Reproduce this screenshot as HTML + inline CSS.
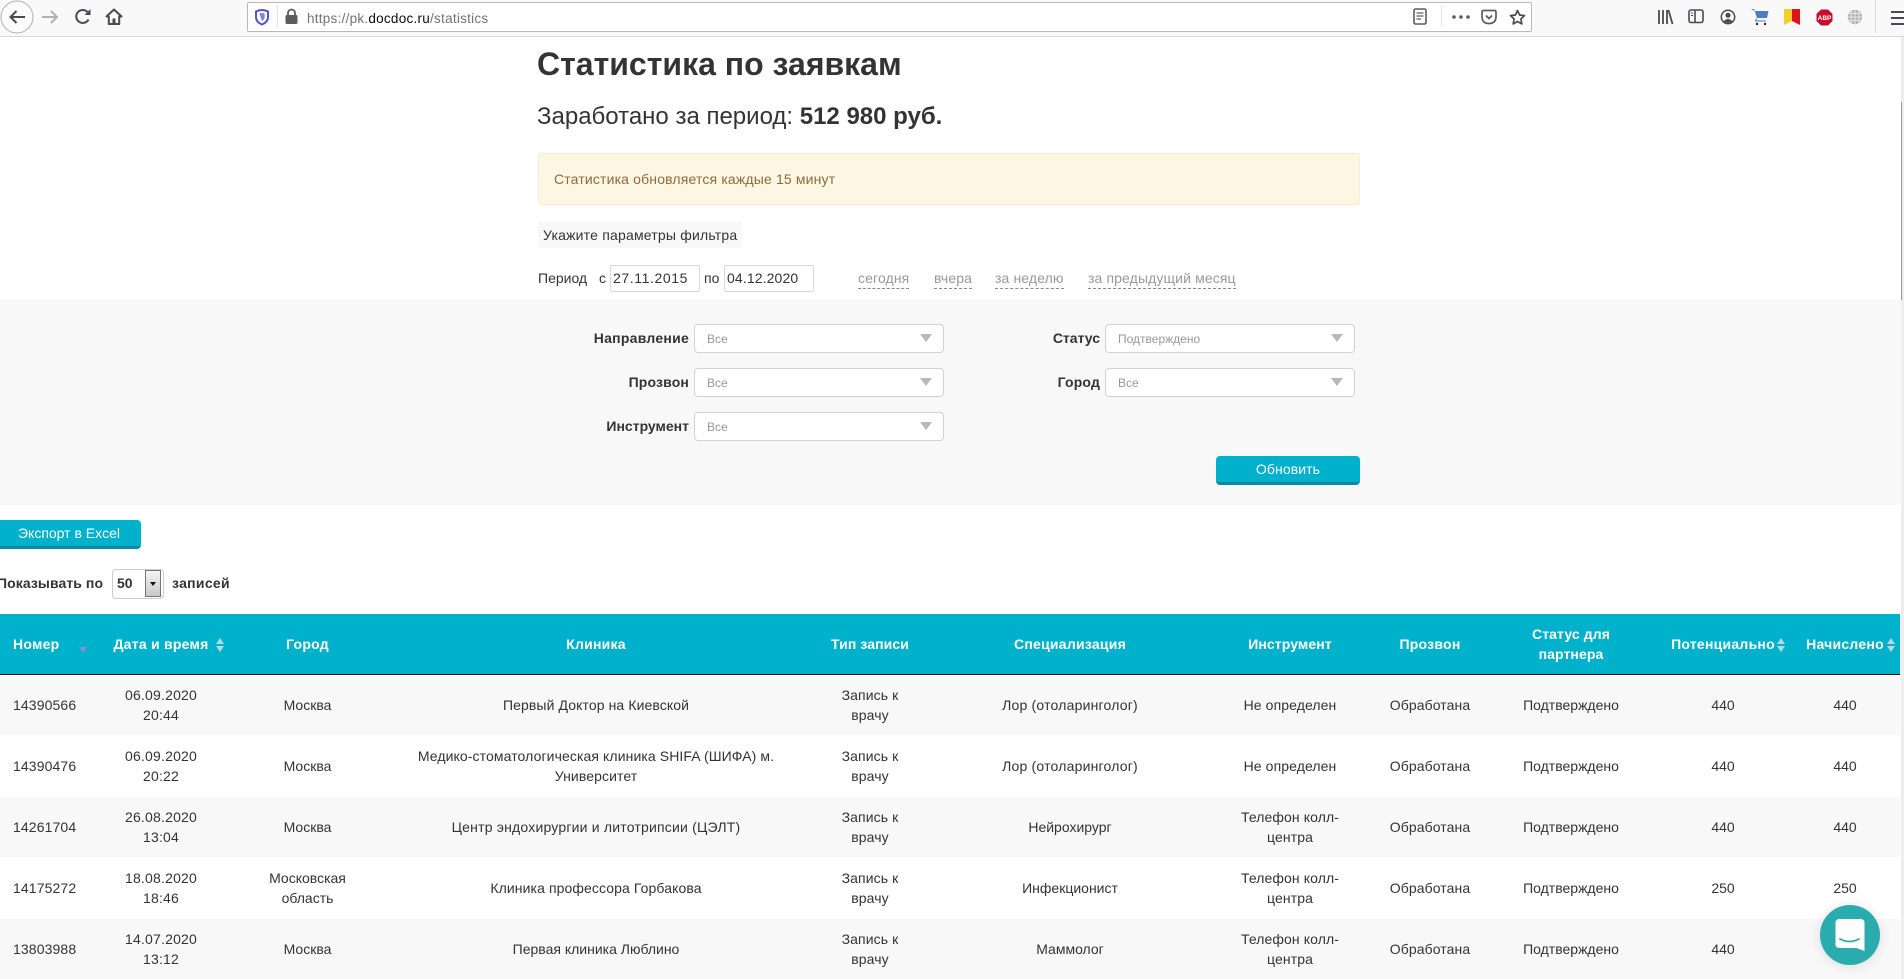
<!DOCTYPE html>
<html lang="ru">
<head>
<meta charset="utf-8">
<title>Статистика по заявкам</title>
<style>
html,body{margin:0;padding:0;width:1904px;height:979px;overflow:hidden;background:#fff}
body{position:relative;font-family:"Liberation Sans",Arial,sans-serif;color:#333;font-size:14px}
.a{position:absolute;white-space:nowrap}
svg{position:absolute;overflow:visible}
#bar{position:absolute;left:0;top:0;width:1904px;height:36px;background:#f9f9fa;border-bottom:1px solid #d7d7db}
#url{position:absolute;left:247px;top:2px;width:1283px;height:28px;background:#fff;border:1px solid #b9b9bb;border-radius:2px}
.sep{position:absolute;width:1px;background:#e4e4e6}
.alert{position:absolute;left:538px;top:153px;width:820px;height:50px;background:#fdf6e3;border:1px solid #f6edd2;border-radius:3px}
.inp{position:absolute;top:265px;height:25px;border:1px solid #d8d8d8;border-radius:2px;font-size:14px;line-height:25px;padding-left:2px;box-sizing:content-box;width:86px;background:#fff}
.lnk{position:absolute;top:269px;height:19px;line-height:19px;color:#999;border-bottom:1px dashed #8a8a8a;white-space:nowrap;font-size:14px;letter-spacing:.12px}
#flt{position:absolute;left:0;top:299px;width:1904px;height:206px;background:#f8f8f8}
.sel{position:absolute;width:248px;height:27px;background:#fff;border:1px solid #d2d2d2;border-radius:4px;font-size:12px;color:#999;line-height:29px;text-indent:12px}
.sel i{position:absolute;right:11px;top:9px;width:0;height:0;border-left:6px solid transparent;border-right:6px solid transparent;border-top:8px solid #b8b8b8}
.lab{position:absolute;font-weight:bold;text-align:right;white-space:nowrap;font-size:14px;line-height:18px}
.btn{position:absolute;background:#00b1cc;border-bottom:3px solid #0a8aa0;color:#fff;font-size:14px;text-align:center;box-sizing:border-box}
table{position:absolute;left:0;top:614px;width:1900px;border-collapse:collapse;table-layout:fixed}
th{background:#00b1cc;color:#fff;font-weight:bold;font-size:14px;line-height:20px;height:60px;padding:0;text-align:center;border-bottom:1px solid #111;white-space:nowrap;letter-spacing:.25px;position:relative}
th.t{letter-spacing:.1px}
td{padding:0;text-align:center;font-size:14px;line-height:20px;white-space:nowrap;color:#333}
td.d{letter-spacing:.2px}
td.c{letter-spacing:.1px}
td.n{text-align:left;padding-left:13px;box-sizing:border-box;letter-spacing:.12px}
td.sp{letter-spacing:.2px}
td:nth-child(9),th:nth-child(9){padding-right:2px}
tr.o td{background:#f8f8f8}
.tri{position:absolute;width:0;height:0;border-left:4px solid transparent;border-right:4px solid transparent}
.up{border-bottom:6px solid #b5d7e0}
.dn{border-top:6px solid #b5d7e0}
#sb{position:absolute;left:1901px;top:37px;width:3px;height:942px;background:#ededed}
#th{position:absolute;left:1901px;top:102px;width:1px;height:198px;background:#9a9a9a}
#chat{position:absolute;left:1820px;top:905px;width:60px;height:60px;border-radius:50%;background:#2aacaf;box-shadow:0 1px 12px rgba(0,0,0,.12)}
</style>
</head>
<body>
<div id="bar">
  <svg style="left:0;top:0" width="140" height="36" viewBox="0 0 140 36">
    <circle cx="17" cy="17" r="16" fill="#fbfbfb" stroke="#b1b1b3"/>
    <path d="M10.500 17H25M16.500 11l-6 6 6 6" fill="none" stroke="#4a4a4f" stroke-width="2"/>
    <path d="M42 17H57M51 11l6 6-6 6" fill="none" stroke="#b1b1b3" stroke-width="2"/>
    <path d="M88.500 19.500a6.500 6.500 0 1 1-1-7.500l2 2" fill="none" stroke="#4a4a4f" stroke-width="2"/>
    <path d="M90.500 9v6h-6z" fill="#4a4a4f"/>
    <path d="M114 9.500l-7.500 7h2.300v7.500h10.400v-7.500h2.300z" fill="none" stroke="#4a4a4f" stroke-width="2" stroke-linejoin="round"/>
    <rect x="112.500" y="18.500" width="3" height="5.500" fill="#4a4a4f"/>
  </svg>
  <div id="url"></div>
  <div class="sep" style="left:277px;top:5px;height:22px"></div>
  <svg style="left:255px;top:9px" width="14" height="16" viewBox="0 0 14 16">
    <path d="M1 2.500Q7-.5 13 2.500V8Q13 13 7 15.500 1 13 1 8Z" fill="#fff" stroke="#5a4fc8" stroke-width="2"/>
    <path d="M4.300 4.500Q7 3.500 9.700 4.500V8Q9.700 10.500 7 12Z" fill="#6a8fd8"/>
  </svg>
  <svg style="left:285px;top:9px" width="13" height="15" viewBox="0 0 13 15">
    <rect x=".5" y="6" width="12" height="9" rx="1.500" fill="#5c5c61"/>
    <path d="M3 6.500V4a3.500 3.500 0 0 1 7 0v2.500" fill="none" stroke="#5c5c61" stroke-width="1.800"/>
  </svg>
  <div class="a" style="left:307px;top:11px;font-size:13.5px;line-height:16px;color:#737373;letter-spacing:.26px">https://pk.<span style="color:#0c0c0d">docdoc.ru</span>/statistics</div>
  <svg style="left:1412px;top:8px" width="16" height="18" viewBox="0 0 16 18">
    <rect x="2" y="1" width="12" height="15" rx="1.500" fill="none" stroke="#5c5c61" stroke-width="1.600"/>
    <path d="M4.500 5H11.500M4.500 8H11.500M4.500 11H9" stroke="#5c5c61" stroke-width="1.200"/>
  </svg>
  <div class="sep" style="left:1441px;top:5px;height:22px"></div>
  <svg style="left:1450px;top:12px" width="24" height="10" viewBox="0 0 24 10">
    <circle cx="4" cy="5" r="1.800" fill="#5c5c61"/><circle cx="11" cy="5" r="1.800" fill="#5c5c61"/><circle cx="18" cy="5" r="1.800" fill="#5c5c61"/>
  </svg>
  <svg style="left:1481px;top:9px" width="16" height="16" viewBox="0 0 16 16">
    <path d="M1 3Q1 1.500 2.500 1.500H13.500Q15 1.500 15 3V7.500Q15 14.500 8 14.500 1 14.500 1 7.500Z" fill="none" stroke="#5c5c61" stroke-width="1.700"/>
    <path d="M5 6.500L8 9.500 11 6.500" fill="none" stroke="#5c5c61" stroke-width="1.800"/>
  </svg>
  <svg style="left:1509px;top:9px" width="17" height="16" viewBox="0 0 17 16">
    <path d="M8.500 1.500l2.100 4.500 4.900.6-3.600 3.400.9 4.900-4.300-2.400-4.300 2.400.9-4.900L1.500 6.600l4.900-.6z" fill="none" stroke="#4a4a4f" stroke-width="1.700" stroke-linejoin="round"/>
  </svg>
  <svg style="left:1657px;top:9px" width="17" height="16" viewBox="0 0 17 16">
    <path d="M2 1V15M6 1V15M10 1V15M11.500 1L15.500 15" stroke="#4a4a4f" stroke-width="1.800" fill="none"/>
  </svg>
  <svg style="left:1688px;top:9px" width="16" height="15" viewBox="0 0 16 15">
    <rect x="1" y="1" width="14" height="12.500" rx="2" fill="none" stroke="#4a4a4f" stroke-width="1.600"/>
    <path d="M7 1V13.500" stroke="#4a4a4f" stroke-width="1.600"/>
    <path d="M3 4H5M3 6.500H5" stroke="#4a4a4f" stroke-width="1"/>
  </svg>
  <svg style="left:1720px;top:9px" width="16" height="16" viewBox="0 0 16 16">
    <circle cx="8" cy="8" r="6.700" fill="none" stroke="#4a4a4f" stroke-width="1.500"/>
    <circle cx="8" cy="6.300" r="2.500" fill="#4a4a4f"/>
    <path d="M3.500 12.500Q8 7.500 12.500 12.500 8 15.500 3.500 12.500Z" fill="#4a4a4f"/>
  </svg>
  <svg style="left:1751px;top:8px" width="18" height="18" viewBox="0 0 18 18">
    <path d="M0 1H3L6 10H16L17.500 3H3.500Z" fill="#4c7cc4"/>
    <path d="M5.500 10.500L4.500 13H15" fill="none" stroke="#4c7cc4" stroke-width="1"/>
    <circle cx="6" cy="16" r="1.200" fill="#222"/><circle cx="14" cy="16" r="1.200" fill="#222"/>
  </svg>
  <svg style="left:1784px;top:9px" width="16" height="16" viewBox="0 0 16 16">
    <path d="M0 0H8V12L0 16Z" fill="#f4cf2e"/><path d="M8 0H16V16L8 12Z" fill="#e0131a"/>
  </svg>
  <svg style="left:1816px;top:9px" width="17" height="17" viewBox="0 0 17 17">
    <path d="M5 .5H12L16.500 5V12L12 16.500H5L.5 12V5Z" fill="#c8102e"/>
    <text x="8.500" y="11" text-anchor="middle" font-family="Liberation Sans" font-weight="bold" font-size="6.500" fill="#fff">ABP</text>
  </svg>
  <svg style="left:1847px;top:9px" width="16" height="16" viewBox="0 0 16 16">
    <circle cx="8" cy="8" r="7.200" fill="#b5b5b7"/>
    <path d="M1 8H15M1.800 4.500H14.200M1.800 11.500H14.200M8 1V15M4.800 1.800Q3 8 4.800 14.200M11.200 1.800Q13 8 11.200 14.200" stroke="#f0f0f0" stroke-width=".8" fill="none"/>
  </svg>
  <div class="sep" style="left:1875px;top:0;height:33px;background:#dcdcde"></div>
  <div class="a" style="left:1891px;top:11px;width:13px;height:2px;background:#4a4a4f"></div>
  <div class="a" style="left:1891px;top:17px;width:13px;height:2px;background:#4a4a4f"></div>
  <div class="a" style="left:1891px;top:23px;width:13px;height:2px;background:#4a4a4f"></div>
</div>

<div class="a" style="left:537px;top:45px;font-size:32px;line-height:38px;font-weight:bold">Статистика по заявкам</div>
<div class="a" style="left:537px;top:102px;font-size:24px;line-height:30px">Заработано за период: <b>512 980 руб.</b></div>

<div class="alert"></div>
<div class="a" style="left:554px;top:170px;font-size:14px;line-height:18px;color:#8a6d3b;letter-spacing:.16px">Статистика обновляется каждые 15 минут</div>

<div class="a" style="left:538px;top:222px;width:204px;height:26px;background:#f8f8f8"></div>
<div class="a" style="left:543px;top:226px;font-size:14px;line-height:18px;letter-spacing:.2px">Укажите параметры фильтра</div>

<div class="a" style="left:538px;top:269px;line-height:18px">Период</div>
<div class="a" style="left:599px;top:269px;line-height:18px">с</div>
<div class="inp" style="left:610px;letter-spacing:.6px">27.11.2015</div>
<div class="a" style="left:704px;top:269px;line-height:18px">по</div>
<div class="inp" style="left:724px;letter-spacing:.12px">04.12.2020</div>
<div class="lnk" style="left:858px">сегодня</div>
<div class="lnk" style="left:934px">вчера</div>
<div class="lnk" style="left:995px">за неделю</div>
<div class="lnk" style="left:1088px">за предыдущий месяц</div>

<div id="flt"></div>
<div class="lab" style="left:560px;width:129px;top:329px;letter-spacing:.25px">Направление</div>
<div class="sel" style="left:694px;top:324px">Все<i></i></div>
<div class="lab" style="left:560px;width:129px;top:373px;letter-spacing:.15px">Прозвон</div>
<div class="sel" style="left:694px;top:368px">Все<i></i></div>
<div class="lab" style="left:560px;width:129px;top:417px">Инструмент</div>
<div class="sel" style="left:694px;top:412px">Все<i></i></div>
<div class="lab" style="left:1000px;width:100px;top:329px">Статус</div>
<div class="sel" style="left:1105px;top:324px">Подтверждено<i></i></div>
<div class="lab" style="left:1000px;width:100px;top:373px;letter-spacing:.15px">Город</div>
<div class="sel" style="left:1105px;top:368px">Все<i></i></div>
<div class="btn" style="left:1216px;top:456px;width:144px;height:29px;line-height:26px;border-radius:4px;letter-spacing:.1px">Обновить</div>

<div class="btn" style="left:-3px;top:520px;width:144px;height:29px;line-height:26px;border-radius:4px">Экспорт в Excel</div>

<div class="a" style="left:-3px;top:574px;font-weight:bold;line-height:18px;letter-spacing:.08px">Показывать по</div>
<div class="a" style="left:112px;top:569px;width:50px;height:28px;border:1px solid #ccc;border-radius:4px;background:#fff"></div>
<div class="a" style="left:117px;top:574px;font-weight:bold;line-height:18px">50</div>
<div class="a" style="left:145px;top:570px;width:16px;height:27px;background:linear-gradient(#f4f4f4,#c9c9c9);border:1px solid #777;box-sizing:border-box"></div>
<div class="a" style="left:150px;top:582px;width:0;height:0;border-left:3.500px solid transparent;border-right:3.500px solid transparent;border-top:4px solid #111"></div>
<div class="a" style="left:172px;top:574px;font-weight:bold;line-height:18px;letter-spacing:.3px">записей</div>

<table>
<colgroup>
<col style="width:91px"><col style="width:140px"><col style="width:153px"><col style="width:424px"><col style="width:124px"><col style="width:276px"><col style="width:164px"><col style="width:116px"><col style="width:168px"><col style="width:134px"><col style="width:110px">
</colgroup>
<thead>
<tr>
<th style="text-align:left;padding-left:13px;box-sizing:border-box">Номер<span class="tri" style="left:79px;top:33px;border-top:6px solid #7f90d6"></span></th>
<th>Дата и время<span class="tri up" style="left:125px;top:24px"></span><span class="tri dn" style="left:125px;top:32px"></span></th>
<th>Город</th>
<th>Клиника</th>
<th class="t">Тип записи</th>
<th>Специализация</th>
<th class="t">Инструмент</th>
<th>Прозвон</th>
<th class="t">Статус для<br>партнера</th>
<th>Потенциально<span class="tri up" style="left:121px;top:24px"></span><span class="tri dn" style="left:121px;top:32px"></span></th>
<th>Начислено<span class="tri up" style="left:97px;top:24px"></span><span class="tri dn" style="left:97px;top:32px"></span></th>
</tr>
</thead>
<tbody>
<tr class="o" style="height:60px"><td class="n">14390566</td><td class="d">06.09.2020<br>20:44</td><td>Москва</td><td class="c">Первый Доктор на Киевской</td><td class="c">Запись к<br>врачу</td><td class="sp">Лор (отоларинголог)</td><td class="c">Не определен</td><td class="c">Обработана</td><td>Подтверждено</td><td>440</td><td>440</td></tr>
<tr style="height:62px"><td class="n">14390476</td><td class="d">06.09.2020<br>20:22</td><td>Москва</td><td class="c">Медико-стоматологическая клиника SHIFA (ШИФА) м.<br>Университет</td><td class="c">Запись к<br>врачу</td><td class="sp">Лор (отоларинголог)</td><td class="c">Не определен</td><td class="c">Обработана</td><td>Подтверждено</td><td>440</td><td>440</td></tr>
<tr class="o" style="height:60px"><td class="n">14261704</td><td class="d">26.08.2020<br>13:04</td><td>Москва</td><td class="sp">Центр эндохирургии и литотрипсии (ЦЭЛТ)</td><td class="c">Запись к<br>врачу</td><td>Нейрохирург</td><td class="c">Телефон колл-<br>центра</td><td class="c">Обработана</td><td>Подтверждено</td><td>440</td><td>440</td></tr>
<tr style="height:62px"><td class="n">14175272</td><td class="d">18.08.2020<br>18:46</td><td>Московская<br>область</td><td class="c">Клиника профессора Горбакова</td><td class="c">Запись к<br>врачу</td><td>Инфекционист</td><td class="c">Телефон колл-<br>центра</td><td class="c">Обработана</td><td>Подтверждено</td><td>250</td><td>250</td></tr>
<tr class="o" style="height:60px"><td class="n">13803988</td><td class="d">14.07.2020<br>13:12</td><td>Москва</td><td>Первая клиника Люблино</td><td class="c">Запись к<br>врачу</td><td>Маммолог</td><td class="c">Телефон колл-<br>центра</td><td class="c">Обработана</td><td>Подтверждено</td><td>440</td><td>440</td></tr>
</tbody>
</table>

<div id="sb"></div><div id="th"></div>

<div id="chat">
  <svg style="left:15px;top:14px" width="30" height="34" viewBox="0 0 30 34">
    <path d="M4 0H25Q29 0 29 4V32L21 29H4Q0 29 0 25V4Q0 0 4 0Z" fill="#fff" transform="translate(.5 0)"/>
    <path d="M5 20Q14.500 25 24 20" fill="none" stroke="#2aacaf" stroke-width="1.800" stroke-linecap="round"/>
  </svg>
</div>
</body>
</html>
